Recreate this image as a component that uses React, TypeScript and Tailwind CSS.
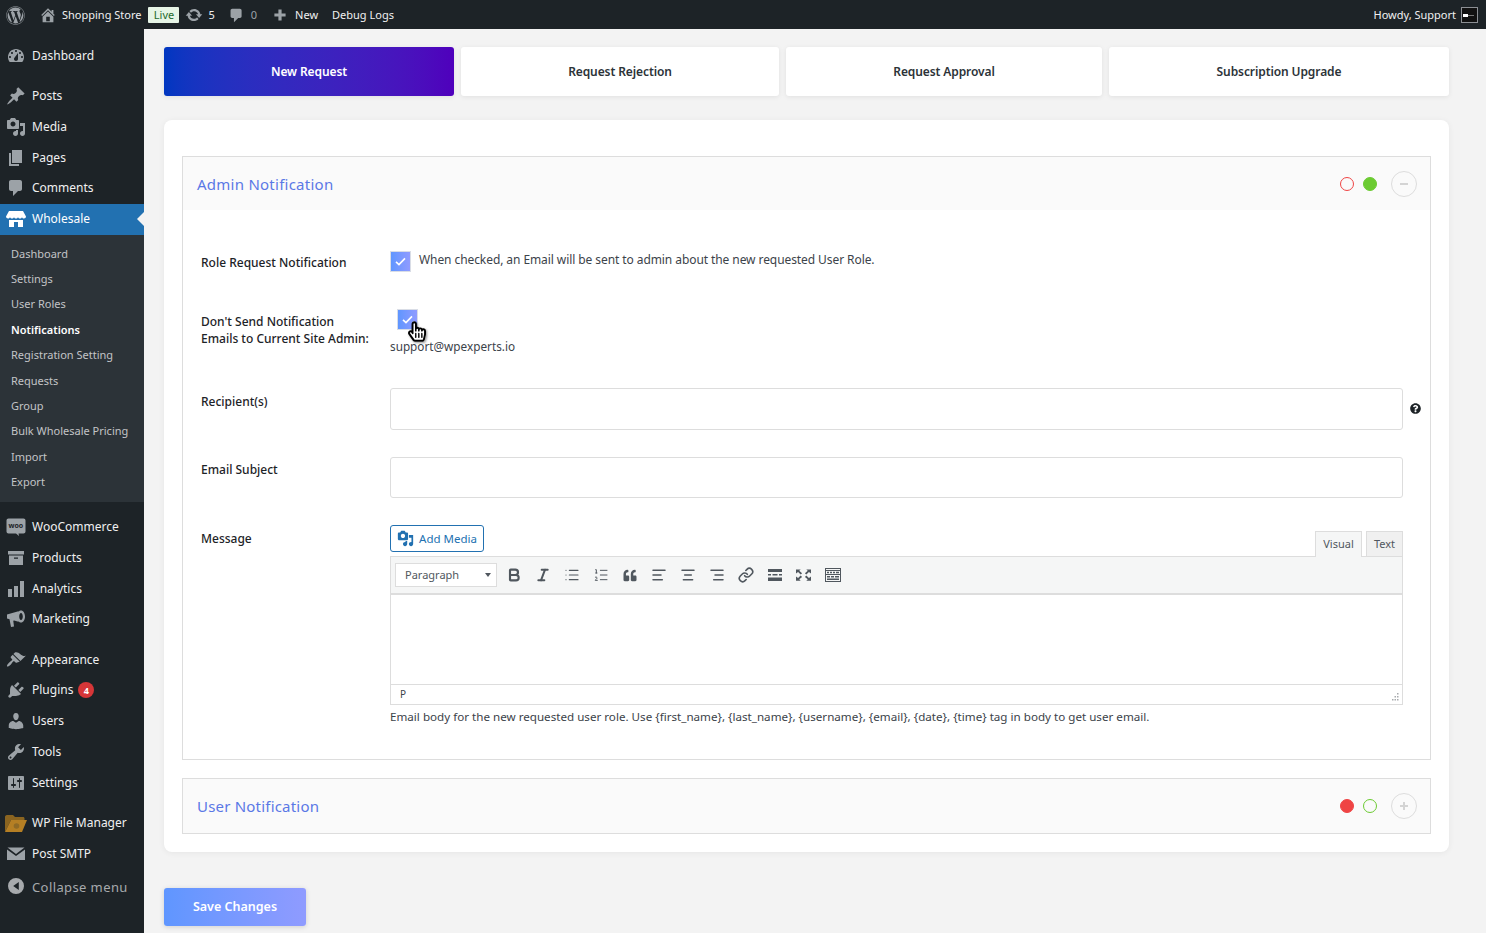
import type { ReactNode } from "react";
import { FaWordpress, FaQuoteLeft, FaHandPointer, FaRegHandPointer, FaQuestionCircle } from "react-icons/fa";
import { Bold, Italic, List, ListOrdered, AlignLeft, AlignCenter, AlignRight, Link as LinkIcon } from "lucide-react";

function Dash({ d, className = "h-5 w-5" }: { d: string; className?: string }) {
  return (
    <svg viewBox="0 0 20 20" className={className} fill="currentColor" fillRule="evenodd">
      <path d={d} />
    </svg>
  );
}

const icons = {
  dashboard:
    "M3.76 16h12.48c1.1-1.37 1.76-3.11 1.76-5 0-4.42-3.58-8-8-8s-8 3.58-8 8c0 1.89.66 3.63 1.76 5zM10 4c.55 0 1 .45 1 1s-.45 1-1 1-1-.45-1-1 .45-1 1-1zM6 6c.55 0 1 .45 1 1s-.45 1-1 1-1-.45-1-1 .45-1 1-1zm8 0c.55 0 1 .45 1 1s-.45 1-1 1-1-.45-1-1 .45-1 1-1zm-5.37 5.55L12 7v6c0 1.1-.9 2-2 2s-2-.9-2-2c0-.57.24-1.08.63-1.45zM4 10c.55 0 1 .45 1 1s-.45 1-1 1-1-.45-1-1 .45-1 1-1zm12 0c.55 0 1 .45 1 1s-.45 1-1 1-1-.45-1-1 .45-1 1-1z",
  post: "M10.44 3.02l1.82-1.82 6.36 6.35-1.83 1.82c-1.05-.68-2.48-.57-3.41.36l-.75.75c-.92.93-1.04 2.35-.35 3.41l-1.83 1.82-2.41-2.41-2.8 2.79c-.42.42-3.38 2.71-3.8 2.29s1.86-3.39 2.28-3.81l2.79-2.79L4.1 9.36l1.83-1.82c1.05.69 2.48.57 3.4-.36l.75-.75c.93-.92 1.05-2.35.36-3.41z",
  media:
    "M13 11V4c0-.55-.45-1-1-1h-1.67L9 1H5L3.67 3H2c-.55 0-1 .45-1 1v7c0 .55.45 1 1 1h10c.55 0 1-.45 1-1zM7 4.5c1.38 0 2.5 1.12 2.5 2.5S8.38 9.5 7 9.5 4.5 8.38 4.5 7 5.62 4.5 7 4.5zM14 6h5v10.5c0 1.38-1.12 2.5-2.5 2.5S14 17.88 14 16.5s1.12-2.5 2.5-2.5c.17 0 .34.02.5.05V9h-3V6zm-4 8.05V13h2v3.5c0 1.38-1.12 2.5-2.5 2.5S7 17.88 7 16.5 8.12 14 9.5 14c.17 0 .34.02.5.05z",
  page: "M6 15V2h10v13H6zm-1 1h8v2H3V5h2v11z",
  comment: "M5 2h9c1.1 0 2 .9 2 2v7c0 1.1-.9 2-2 2h-2l-5 5v-5H5c-1.1 0-2-.9-2-2V4c0-1.1.9-2 2-2z",
  store:
    "M3 2h14l3 5.5c0 1.2-.9 2-2 2s-1.600-.6-2-1.300c-.4.7-1.100 1.300-2 1.300s-1.600-.6-2-1.300c-.4.7-1.100 1.300-2 1.300s-1.600-.6-2-1.300c-.4.7-1.100 1.300-2 1.300s-1.600-.6-2-1.300c-.4.7-1.100 1.300-2 1.300s-2-.8-2-2zM3 11h14v7H12v-5H8v5H3z",
  woo: "M2.500 1.500h15c1.100 0 2 .9 2 2v11c0 1.100-.9 2-2 2h-5l.5 2.500-3-2.500h-7.500c-1.100 0-2-.9-2-2v-11c0-1.100.9-2 2-2z",
  products: "M2 3h16v3.500H2zM3 7.500h14V17H3zM8 9.500v1.200h4V9.500z",
  analytics: "M18 18V2h-4v16h4zm-6 0V7H8v11h4zm-6 0v-8H2v8h4z",
  marketing:
    "M1 5.500 12.500 2.200v10.600L1 9.500zM15 1.500c2.300 0 4 2.700 4 6s-1.700 6-4 6c-1 0-1.800-.5-2.500-1.300V2.800c.7-.8 1.500-1.300 2.500-1.300zM15 4c-1 0-1.800 1.600-1.800 3.500S14 11 15 11s1.800-1.600 1.800-3.500S16 4 15 4zM3.500 10.200 7.200 11.300 8 17.500 5 18z",
  appearance:
    "M14.480 11.060L7.410 3.990l1.500-1.500c.5-.56 2.300-.47 3.510.32 1.210.8 1.430 1.280 2.910 2.100 1.180.64 2.450 1.260 4.450.85zm-.71.71L6.700 4.700 4.930 6.470c-.39.39-.39 1.020 0 1.410l1.060 1.060c.39.39.39 1.030 0 1.420-.6.6-1.430 1.110-2.210 1.690-.35.26-.7.53-1.010.84-1.340 1.340-2.270 2.970-1.710 3.530.56.56 2.190-.37 3.530-1.710.31-.31.58-.66.84-1.010.58-.78 1.090-1.610 1.690-2.210.39-.39 1.030-.39 1.420 0l1.060 1.060c.39.39 1.020.39 1.410 0z",
  plugins:
    "M13.110 4.360L9.870 7.600 8 5.730l3.240-3.240c.35-.34 1.050-.2 1.560.32.52.51.66 1.210.31 1.550zm-8 1.770l.91-1.120 9.010 9.010-1.190.84c-.71.71-2.630 1.160-3.820 1.160H6.140L4.900 17.260c-.59.59-1.540.59-2.120 0-.59-.58-.59-1.530 0-2.120l1.240-1.240v-3.880c0-1.130.4-3.190 1.090-3.890zm7.260 3.970l3.240-3.240c.34-.35 1.040-.21 1.550.31.52.51.66 1.210.31 1.550l-3.240 3.250z",
  users:
    "M10 9.250c-2.270 0-2.730-3.440-2.730-3.440C7 4.020 7.820 2 9.970 2c2.160 0 2.980 2.020 2.710 3.810 0 0-.41 3.440-2.68 3.440zm0 2.570L12.720 10c2.390 0 4.520 2.330 4.520 4.530v2.490s-3.650 1.130-7.240 1.130c-3.650 0-7.240-1.130-7.240-1.130v-2.490c0-2.250 1.940-4.530 4.470-4.530z",
  tools:
    "M16.680 9.770c-1.340 1.340-3.300 1.670-4.950.99l-5.410 6.520c-.99.99-2.590.99-3.580 0s-.99-2.59 0-3.570l6.520-5.420c-.68-1.650-.35-3.610.99-4.950 1.280-1.280 3.120-1.620 4.720-1.060l-2.890 2.890 2.820 2.820 2.860-2.870c.53 1.580.18 3.390-1.080 4.650zM3.810 16.210c.4.39 1.040.39 1.430 0 .4-.4.4-1.040 0-1.430-.39-.4-1.030-.4-1.430 0-.39.39-.39 1.030 0 1.430z",
  settings:
    "M18 16V4c0-.55-.45-1-1-1H3c-.55 0-1 .45-1 1v12c0 .55.45 1 1 1h14c.55 0 1-.45 1-1zM8 11h1c.55 0 1 .45 1 1s-.45 1-1 1H8v1.500c0 .28-.22.5-.5.5s-.5-.22-.5-.5V13H6c-.55 0-1-.45-1-1s.45-1 1-1h1V5.500c0-.28.22-.5.5-.5s.5.22.5.5V11zm5-2h-1c-.55 0-1-.45-1-1s.45-1 1-1h1V5.500c0-.28.22-.5.5-.5s.5.22.5.5V7h1c.55 0 1 .45 1 1s-.45 1-1 1h-1v5.500c0 .28-.22.5-.5.5s-.5-.22-.5-.5V9z",
  email: "M1.500 3.500h17L10 10zM1 5.500l9 6.500 9-6.500V16H1z",
  collapse: "M10 20a10 10 0 1 1 0-20 10 10 0 0 1 0 20zM13.500 5 6.500 10l7 5z",
  home: "M16 8.500l1.530 1.530-1.060 1.060L10 4.620l-6.470 6.470-1.060-1.060L10 2.500l4 4v-2h2v4zm-6-2.460l6 5.990V18H4v-5.970zM12 17v-5H8v5h4z",
  update:
    "M10.200 3.280c3.530 0 6.430 2.610 6.920 6h2.080l-3.500 4-3.500-4h2.320c-.45-1.970-2.210-3.450-4.320-3.450-1.450 0-2.730.71-3.540 1.780L4.950 5.660C6.230 4.200 8.110 3.280 10.200 3.280zm-.4 13.440c-3.520 0-6.430-2.610-6.920-6H.8l3.500-4c1.170 1.330 2.330 2.670 3.500 4H5.480c.45 1.970 2.210 3.450 4.320 3.450 1.450 0 2.730-.71 3.540-1.780l1.710 1.950c-1.280 1.460-3.150 2.380-5.250 2.380z",
  plus: "M17 8v4h-5v5H8v-5H3V8h5V3h4v5z",
};

function FileManagerIcon() {
  return (
    <svg viewBox="0 0 22 18" className="h-[18px] w-[22px]">
      <path d="M0 3c0-1 .6-2 2-2h6l2 2h8c1 0 1.500.6 1.500 1.500V6H6L0 18z" fill="#8a6420" />
      <path d="M6 6h16l-5 12H0z" fill="#b57f24" />
      <circle cx="11.500" cy="12" r="2.800" fill="#8f6a26" />
    </svg>
  );
}

type Item = { label: string; icon: ReactNode; badge?: string };

const g = (d: string) => <Dash d={d} />;

const groupOne: Item[] = [
  { label: "Posts", icon: g(icons.post) },
  { label: "Media", icon: g(icons.media) },
  { label: "Pages", icon: g(icons.page) },
  { label: "Comments", icon: g(icons.comment) },
];

const groupTwo: Item[] = [
  {
    label: "WooCommerce",
    icon: (
      <span className="relative flex h-5 w-5 items-center justify-center">
        <Dash d={icons.woo} />
        <span className="absolute top-[5px] left-[3px] text-[7px] leading-[8px] font-bold text-[#1d2327]">woo</span>
      </span>
    ),
  },
  { label: "Products", icon: g(icons.products) },
  { label: "Analytics", icon: g(icons.analytics) },
  { label: "Marketing", icon: g(icons.marketing) },
];

const groupThree: Item[] = [
  { label: "Appearance", icon: g(icons.appearance) },
  { label: "Plugins", icon: g(icons.plugins), badge: "4" },
  { label: "Users", icon: g(icons.users) },
  { label: "Tools", icon: g(icons.tools) },
  { label: "Settings", icon: g(icons.settings) },
];

const groupFour: Item[] = [
  { label: "WP File Manager", icon: <FileManagerIcon /> },
  { label: "Post SMTP", icon: g(icons.email) },
];

const subItems = [
  "Dashboard",
  "Settings",
  "User Roles",
  "Notifications",
  "Registration Setting",
  "Requests",
  "Group",
  "Bulk Wholesale Pricing",
  "Import",
  "Export",
];

function MenuRow({ label, icon, badge }: Item) {
  return (
    <div className="flex h-[30.8px] items-center text-[12px] text-[#f0f0f1]">
      <span className="flex w-[32px] shrink-0 justify-center pr-[1px] text-[#9ca2a7]">{icon}</span>
      <span>{label}</span>
      {badge && (
        <span className="ml-[5px] flex h-4 w-4 items-center justify-center rounded-full bg-[#d63638] text-[9px] font-bold text-white">
          {badge}
        </span>
      )}
    </div>
  );
}

function Sidebar() {
  return (
    <aside className="w-[144px] shrink-0 bg-[#1d2327] pt-[11.400px]">
      <MenuRow label="Dashboard" icon={g(icons.dashboard)} />
      <div className="mt-[9.500px]">
        {groupOne.map((i) => (
          <MenuRow key={i.label} {...i} />
        ))}
      </div>
      <div className="relative flex h-[30.8px] items-center bg-[#2271b1] text-[12px] text-white">
        <span className="flex w-[32px] shrink-0 justify-center pr-[1px]">
          <Dash d={icons.store} />
        </span>
        <span>Wholesale</span>
        <span className="absolute top-[8px] right-0 h-0 w-0 border-y-[7px] border-r-[7px] border-y-transparent border-r-[#f3f3f3]" />
      </div>
      <div className="bg-[#2c3338] pt-[6.600px] pb-[6.500px]">
        {subItems.map((s) => (
          <div
            key={s}
            className={`flex h-[25.4px] items-center pl-[11px] text-[11px] ${
              s === "Notifications" ? "font-semibold text-white" : "text-[#c3c4c7]"
            }`}
          >
            {s}
          </div>
        ))}
      </div>
      <div className="mt-[9.900px]">
        {groupTwo.map((i) => (
          <MenuRow key={i.label} {...i} />
        ))}
      </div>
      <div className="mt-[9.500px]">
        {groupThree.map((i) => (
          <MenuRow key={i.label} {...i} />
        ))}
      </div>
      <div className="mt-[9.500px]">
        {groupFour.map((i) => (
          <MenuRow key={i.label} {...i} />
        ))}
      </div>
      <div className="mt-[2px] flex h-[32px] items-center text-[13px] tracking-[0.4px] text-[#a7aaad]">
        <span className="mb-[3px] flex w-[32px] shrink-0 justify-center pr-[1px] text-[#a7aaad]">
          <Dash d={icons.collapse} className="h-4 w-4" />
        </span>
        <span>Collapse menu</span>
      </div>
    </aside>
  );
}

function AdminBar() {
  return (
    <header className="flex h-[29px] shrink-0 items-center bg-[#1d2327] pt-[1px] pr-[8px] pl-[6px] text-[11px] text-[#f0f0f1]">
      <FaWordpress className="h-[19px] w-[19px] text-[#9ca2a7]" />
      <span className="ml-[14px] text-[#9ca2a7]">
        <Dash d={icons.home} className="h-[18px] w-[18px]" />
      </span>
      <span className="ml-[5px]">Shopping Store</span>
      <span className="ml-[7px] flex h-[16px] w-[31px] items-center justify-center rounded-[1px] bg-[#e6f4e6] text-[11px] text-[#1f6b2e]">
        Live
      </span>
      <span className="ml-[6px] text-[#9ca2a7]">
        <Dash d={icons.update} className="h-[18px] w-[18px]" />
      </span>
      <span className="ml-[5px]">5</span>
      <span className="ml-[13px] text-[#9ca2a7]">
        <Dash d={icons.comment} className="h-[17px] w-[17px]" />
      </span>
      <span className="ml-[6px] text-[#9ca2a7]">0</span>
      <span className="ml-[15px] text-[#9ca2a7]">
        <Dash d={icons.plus} className="h-[16px] w-[16px]" />
      </span>
      <span className="ml-[7px]">New</span>
      <span className="ml-[14px]">Debug Logs</span>
      <span className="ml-auto">Howdy, Support</span>
      <span className="ml-[5px] flex h-[16px] w-[17px] items-center border border-[#8c8f94] bg-[#111111] pl-[1px]">
        <span className="h-[3px] w-[5px] bg-white" />
        <span className="h-px w-[6px] bg-[#777]" />
      </span>
    </header>
  );
}

function Tab({ label, width, active }: { label: string; width: string; active?: boolean }) {
  return (
    <div
      className={`flex h-[49px] items-center justify-center rounded-[3px] text-[12px] font-semibold tracking-[-0.1px] shadow-[0_1px_5px_rgba(0,0,0,0.08)] ${width} ${
        active ? "bg-gradient-to-r from-[#0037c1] to-[#4f00bc] text-white" : "bg-white text-[#2c3338]"
      }`}
    >
      {label}
    </div>
  );
}

function Check({ className = "" }: { className?: string }) {
  return (
    <span
      className={`flex h-[21px] w-[21px] items-center justify-center border border-[#d9dde6] bg-gradient-to-r from-[#5f96ff] to-[#8f9bff] ${className}`}
    >
      <svg viewBox="0 0 12 10" className="h-[9px] w-[11px]" fill="none" stroke="white" strokeWidth="1.800">
        <path d="M1 5.500 4.300 8.500 11 1.500" />
      </svg>
    </span>
  );
}

function Toggles({ redOn, plus }: { redOn?: boolean; plus?: boolean }) {
  return (
    <div className="flex items-center">
      <span
        className={`h-[14px] w-[14px] rounded-full border border-[#ef4444] ${redOn ? "bg-[#ef4444]" : ""}`}
      />
      <span
        className={`ml-[9px] h-[14px] w-[14px] rounded-full border border-[#6ccb32] ${redOn ? "" : "bg-[#6ccb32]"}`}
      />
      <span className="ml-[14px] flex h-[26px] w-[26px] items-center justify-center rounded-full border border-[#dddddd] text-[#d0d0d0]">
        <span className="relative block h-[2px] w-[8px] bg-[#d4d4d4]">
          {plus && <span className="absolute top-[-3px] left-[3px] block h-[8px] w-[2px] bg-[#d4d4d4]" />}
        </span>
      </span>
    </div>
  );
}

function TinyIcon({ children }: { children: ReactNode }) {
  return <span className="flex h-[20px] w-[29px] items-center justify-center text-[#50575e]">{children}</span>;
}

function Toolbar() {
  const lucide = "h-[16px] w-[16px]";
  return (
    <div className="flex h-[38px] items-center border-b-2 border-[#dddddd] bg-[#f5f6f6] pl-[4px]">
      <div className="flex h-[24px] w-[102px] items-center justify-between border border-[#dddddd] bg-white pr-[5px] pl-[9px] text-[11px] text-[#50575e]">
        <span>Paragraph</span>
        <span className="h-0 w-0 border-x-[3px] border-t-[4px] border-x-transparent border-t-[#50575e]" />
      </div>
      <div className="ml-[2px] flex items-center">
        <TinyIcon>
          <Bold className={lucide} strokeWidth={3.2} />
        </TinyIcon>
        <TinyIcon>
          <Italic className={lucide} strokeWidth={3} />
        </TinyIcon>
        <TinyIcon>
          <List className={lucide} strokeWidth={1.700} />
        </TinyIcon>
        <TinyIcon>
          <ListOrdered className={lucide} strokeWidth={1.500} />
        </TinyIcon>
        <TinyIcon>
          <FaQuoteLeft className="h-[13px] w-[14px]" />
        </TinyIcon>
        <TinyIcon>
          <AlignLeft className={lucide} strokeWidth={2.200} />
        </TinyIcon>
        <TinyIcon>
          <AlignCenter className={lucide} strokeWidth={2.200} />
        </TinyIcon>
        <TinyIcon>
          <AlignRight className={lucide} strokeWidth={2.200} />
        </TinyIcon>
        <TinyIcon>
          <LinkIcon className={lucide} strokeWidth={2.400} />
        </TinyIcon>
        <TinyIcon>
          <svg viewBox="0 0 14 12" className="h-[12px] w-[14px]" fill="currentColor">
            <path d="M0 0h14v3H0zM0 5h3v1.500H0zM4.500 5h5v1.500h-5zM11 5h3v1.500h-3zM0 8.500h14V12H0z" />
          </svg>
        </TinyIcon>
        <TinyIcon>
          <svg viewBox="0 0 16 12" className="h-[12px] w-[15px]" fill="currentColor">
            <path d="M0 0h5L3.500 1.500 6.500 4 5 5.500 2.200 2.700 0 4.500zM16 0h-5l1.500 1.500L9.500 4 11 5.500l2.800-2.800 2.200 1.800zM0 12h5L3.500 10.500 6.500 8 5 6.500 2.200 9.300 0 7.500zM16 12h-5l1.500-1.500L9.500 8 11 6.500l2.800 2.800 2.200-1.800z" />
          </svg>
        </TinyIcon>
        <TinyIcon>
          <svg viewBox="0 0 16 14" className="h-[14px] w-[16px]" fill="currentColor">
            <path d="M0 0h16v14H0zM1 1v1h14V1zM1 3v3h14V3zM1 7v6h14V7z" fillRule="evenodd" />
            <path d="M2 3.800h2v1.400H2zM5 3.800h2v1.400H5zM8 3.800h2v1.400H8zM11 3.800h3v1.400h-3zM2 8h3v1.500H2zM6 8h3v1.500H6zM10 8h4v1.500h-4zM2 10.500h12V12H2z" />
          </svg>
        </TinyIcon>
      </div>
    </div>
  );
}

function Editor() {
  return (
    <div className="min-w-0 flex-1">
      <div className="flex items-end justify-between">
        <button className="mb-[4px] flex h-[27px] w-[94px] items-center justify-center gap-[5px] rounded-[3px] border border-[#2271b1] text-[11.500px] text-[#2271b1]">
          <Dash d={icons.media} className="h-[17px] w-[17px]" />
          Add Media
        </button>
        <div className="z-10 -mb-px flex items-end">
          <span className="flex h-[26px] w-[47px] items-center justify-center border border-b-0 border-[#dddddd] bg-[#f5f6f6] text-[11px] text-[#50575e]">
            Visual
          </span>
          <span className="ml-[4px] flex h-[26px] w-[37px] items-center justify-center border border-[#dddddd] bg-[#f0f0f0] text-[11px] text-[#50575e]">
            Text
          </span>
        </div>
      </div>
      <div className="border border-[#dddddd]">
        <Toolbar />
        <div className="h-[89px] bg-white" />
        <div className="relative flex h-[20px] items-center border-t border-[#dddddd] pl-[9px] text-[10px] text-[#3c434a]">
          P
          <svg viewBox="0 0 8 8" className="absolute right-[3px] bottom-[3px] h-[8px] w-[8px]" fill="#a7aaad">
            <path d="M6 0h1.500v1.500H6zM3.500 3H5v1.500H3.500zM6 3h1.500v1.500H6zM1 6h1.500v1.500H1zM3.500 6H5v1.500H3.500zM6 6h1.500v1.500H6z" />
          </svg>
        </div>
      </div>
      <p className="mt-[3px] text-[11.630px] leading-[18px] text-[#3c434a]">
        Email body for the new requested user role. Use {"{first_name}, {last_name}, {username}, {email}, {date}, {time}"} tag in body to get user email.
      </p>
    </div>
  );
}

function Label({ children, className = "" }: { children: ReactNode; className?: string }) {
  return <div className={`w-[189px] shrink-0 text-[12px] font-medium text-[#1d2327] ${className}`}>{children}</div>;
}

function HandCursor() {
  return (
    <span className="absolute top-[12px] left-[18px] z-20 h-[21px] w-[18px] drop-shadow-[1px_1px_1px_rgba(0,0,0,0.4)]">
      <FaHandPointer className="absolute inset-0 h-full w-full text-white" />
      <FaRegHandPointer className="absolute inset-0 h-full w-full text-black" />
    </span>
  );
}

function AdminSection() {
  return (
    <section className="border border-[#dddddd]">
      <div className="flex h-[53px] items-center justify-between bg-[#fafafa] pr-[13px] pl-[14px]">
        <h2 className="pt-[1px] text-[15px] tracking-[0.25px] text-[#5a78e6]">Admin Notification</h2>
        <Toggles />
      </div>
      <div className="pb-[33px] pl-[18px]">
        <div className="flex pt-[41px]">
          <Label className="pt-[3px]">Role Request Notification</Label>
          <Check />
          <span className="ml-[8px] text-[12px] leading-[18px] tracking-[-0.08px] text-[#3c434a]">
            When checked, an Email will be sent to admin about the new requested User Role.
          </span>
        </div>
        <div className="flex pt-[37px]">
          <Label className="pt-[4px] leading-[17px]">
            Don't Send Notification
            <br />
            Emails to Current Site Admin:
          </Label>
          <div className="relative">
            <Check className="ml-[7px]" />
            <HandCursor />
            <div className="mt-[7px] text-[11.750px] leading-[18px] text-[#3c434a]">support@wpexperts.io</div>
          </div>
        </div>
        <div className="flex pt-[33px]">
          <Label className="pt-[5px]">Recipient(s)</Label>
          <div className="h-[42px] flex-1 rounded-[3px] border border-[#dddddd] bg-white" />
          <span className="flex w-[27px] items-center pb-[2px] pl-[7px] text-[#1d2327]">
            <FaQuestionCircle className="h-[11px] w-[11px]" />
          </span>
        </div>
        <div className="flex pt-[27px]">
          <Label className="pt-[4px]">Email Subject</Label>
          <div className="mr-[27px] h-[41px] flex-1 rounded-[3px] border border-[#dddddd] bg-white" />
        </div>
        <div className="flex pt-[27px]">
          <Label className="pt-[5px]">Message</Label>
          <div className="mr-[27px] flex min-w-0 flex-1">
            <Editor />
          </div>
        </div>
      </div>
    </section>
  );
}

export default function App() {
  return (
    <div className="flex min-h-[933px] flex-col bg-[#f3f3f3] font-['Noto_Sans',sans-serif]">
      <AdminBar />
      <div className="flex flex-1">
        <Sidebar />
        <main className="min-w-0 flex-1 pt-[18px] pr-[37px] pl-[20px]">
          <div className="flex gap-[7px]">
            <Tab label="New Request" width="w-[290px]" active />
            <Tab label="Request Rejection" width="w-[318px]" />
            <Tab label="Request Approval" width="w-[316px]" />
            <Tab label="Subscription Upgrade" width="w-[340px]" />
          </div>
          <div className="mt-[24px] rounded-[8px] bg-white px-[18px] pt-[36px] pb-[18px] shadow-[0_1px_6px_rgba(0,0,0,0.06)]">
            <AdminSection />
            <section className="mt-[18px] flex h-[56px] items-center justify-between border border-[#dddddd] bg-[#fafafa] pr-[13px] pl-[14px]">
              <h2 className="text-[15px] tracking-[0.2px] text-[#5a78e6]">User Notification</h2>
              <Toggles redOn plus />
            </section>
          </div>
          <button className="mt-[36px] h-[38px] w-[142px] rounded-[3px] bg-gradient-to-r from-[#5f96ff] to-[#8f9bff] text-[12.500px] font-semibold text-white shadow-[0_1px_5px_rgba(0,0,0,0.15)]">
            Save Changes
          </button>
        </main>
      </div>
    </div>
  );
}
